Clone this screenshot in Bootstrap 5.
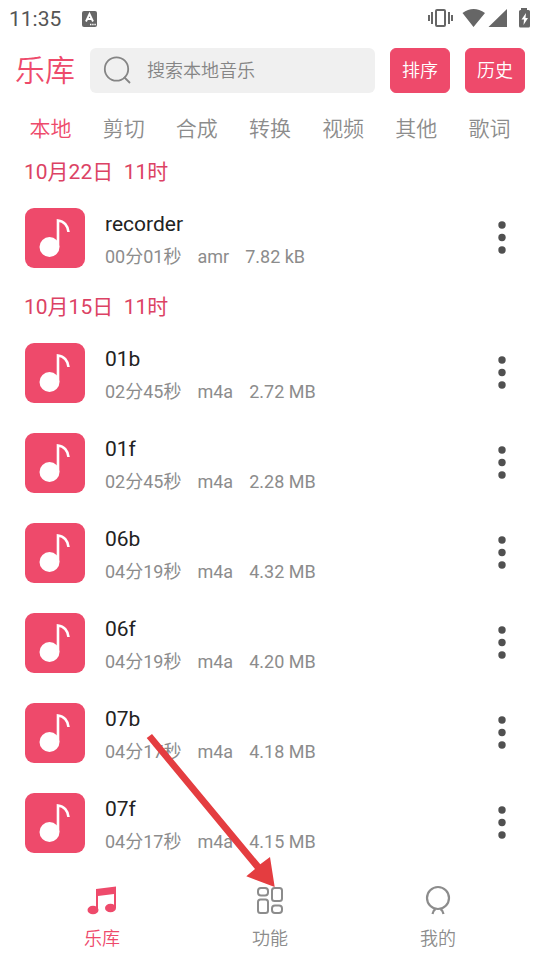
<!DOCTYPE html>
<html lang="zh-CN">
<head>
<meta charset="utf-8">
<meta name="viewport" content="width=device-width, initial-scale=1">
<title>乐库</title>
<link rel="stylesheet" href="https://cdn.jsdelivr.net/npm/bootstrap@5.3.0/dist/css/bootstrap.min.css">
<style>
  :root { --rose: #ee4a6b; --ash: #8c8c8c; }
  body { font-family: Roboto, "Noto Sans CJK SC", sans-serif; background: #fff; color: #222; font-size: 18px; line-height: 24px; }
  svg { display: block; flex-shrink: 0; }
  .status { height: 37px; padding: 0 10px 0 9px; color: #555; font-size: 21px; }
  .topbar { padding: 11px 15px 0; gap: 15px; }
  .brand { font-size: 30px; line-height: 45px; font-weight: 350; color: var(--rose); margin: 0; }
  .search { height: 45px; background: #f0f0f0; border-radius: 6px; padding: 0 12px; gap: 14px; }
  .search input { font-size: 18px; line-height: 24px; color: #555; font-weight: 350; }
  .search input::placeholder { color: #858585; opacity: 1; }
  .btn-rose { --bs-btn-bg: var(--rose); --bs-btn-color: #fff; --bs-btn-border-color: var(--rose); --bs-btn-hover-bg: #d93d5d; --bs-btn-hover-color: #fff; --bs-btn-padding-x: 0; --bs-btn-padding-y: 0; --bs-btn-border-radius: 6px; --bs-btn-font-size: 18px; --bs-btn-font-weight: 350; flex: 0 0 60px; height: 45px; }
  .tabs { padding: 17px 14px 0 14px; }
  .tabs a { font-size: 21px; line-height: 38px; font-weight: 350; color: var(--ash); }
  .tabs a.active, .dock a.active { color: var(--rose); }
  .day { font-size: 21px; line-height: 42px; font-weight: 400; color: #dc4264; padding: 3px 0 0 24px; margin: 0; white-space: pre; }
  .song { height: 90px; padding: 0 16px 0 25px; gap: 20px; }
  .cover { width: 60px; height: 60px; background: var(--rose); border-radius: 9px; }
  .title { font-size: 21px; line-height: 30px; font-weight: 400; margin: 0; padding-top: 2px; }
  .meta { color: var(--ash); gap: 16px; line-height: 24px; margin-top: 6px; }
  .more { width: 45px; height: 60px; color: #505050; }
  .dock { padding: 15px 18px 9px; color: var(--ash); }
  .dock a { color: inherit; font-weight: 350; gap: 11px; }
  .pointer { position: absolute; right: calc(50% - 5px); bottom: 64px; pointer-events: none; }
</style>
</head>
<body>
<svg class="d-none" aria-hidden="true">
  <symbol id="note" viewBox="0 0 60 60">
    <circle cx="24.500" cy="39" r="10" fill="#fff"/>
    <path d="M33 39V12.500C39 13 43 18 43.500 24" fill="none" stroke="#fff" stroke-width="2.600"/>
  </symbol>
  <symbol id="dots" viewBox="0 0 8 34">
    <g fill="currentColor"><circle cx="4" cy="4" r="3.700"/><circle cx="4" cy="16.500" r="3.700"/><circle cx="4" cy="29" r="3.700"/></g>
  </symbol>
</svg>
<div class="min-vh-100 d-flex flex-column">
  <div class="status d-flex align-items-center">
    <span>11:35</span>
    <svg class="ms-3" width="24" height="18" viewBox="0 0 24 18" aria-hidden="true"><rect x="5" y="1" width="15" height="16" rx="2" fill="#666"/><path d="M9 11.500L12.500 4L16 11.500M10 9H15" fill="none" stroke="#fff" stroke-width="1.900"/><path d="M13 14.500H19" stroke="#fff" stroke-width="1.300" stroke-dasharray="1.400 .8"/></svg>
    <svg class="ms-auto" width="103" height="22" viewBox="0 0 103 22" aria-hidden="true">
      <g fill="none" stroke="#666" stroke-width="2"><rect x="9" y="2" width="9" height="16" rx="1"/><path d="M2 7V13M5 4V16M22 4V16M25 7V13"/></g>
      <path d="M35.500 5Q46.500-3 58 5L46.500 19ZM61.500 19L80 1V19Z" fill="#666"/>
      <path d="M94 0H100V2H101.500Q103 2 103 3.500V18Q103 19.500 101.500 19.500H93.500Q92 19.500 92 18V3.500Q92 2 93.500 2H94Z" fill="#666"/>
      <path d="M99 5L94.500 11.500H97L96.500 17L101 10H98.500Z" fill="#fff"/>
    </svg>
  </div>
  <header class="topbar d-flex align-items-center">
    <h1 class="brand text-nowrap">乐库</h1>
    <label class="search d-flex align-items-center flex-grow-1 overflow-hidden" for="query">
      <svg width="31" height="31" viewBox="0 0 31 31" fill="none" stroke="#858585" stroke-width="1.800" aria-hidden="true"><circle cx="14.500" cy="14" r="11.700"/><path d="M22 22L28 28"/></svg>
      <input id="query" type="text" class="form-control border-0 bg-transparent shadow-none p-0" placeholder="搜索本地音乐" aria-label="搜索本地音乐">
    </label>
    <button type="button" class="btn btn-rose">排序</button>
    <button type="button" class="btn btn-rose">历史</button>
  </header>
  <nav class="tabs d-flex text-center" aria-label="分类">
    <a class="flex-fill text-decoration-none active" href="#local">本地</a>
    <a class="flex-fill text-decoration-none" href="#cut">剪切</a>
    <a class="flex-fill text-decoration-none" href="#merge">合成</a>
    <a class="flex-fill text-decoration-none" href="#convert">转换</a>
    <a class="flex-fill text-decoration-none" href="#video">视频</a>
    <a class="flex-fill text-decoration-none" href="#other">其他</a>
    <a class="flex-fill text-decoration-none" href="#lyrics">歌词</a>
  </nav>
  <main class="flex-grow-1" id="local">
    <h2 class="day">10月22日  11时</h2>
    <article class="song d-flex align-items-center">
      <svg class="cover" aria-hidden="true"><use href="#note"/></svg>
      <div class="flex-grow-1"><h3 class="title">recorder</h3><div class="meta d-flex"><span>00分01秒</span><span>amr</span><span>7.82 kB</span></div></div>
      <button type="button" class="more btn border-0 p-0 d-flex align-items-center justify-content-center" aria-label="更多"><svg width="8" height="34"><use href="#dots"/></svg></button>
    </article>
    <h2 class="day">10月15日  11时</h2>
    <article class="song d-flex align-items-center">
      <svg class="cover" aria-hidden="true"><use href="#note"/></svg>
      <div class="flex-grow-1"><h3 class="title">01b</h3><div class="meta d-flex"><span>02分45秒</span><span>m4a</span><span>2.72 MB</span></div></div>
      <button type="button" class="more btn border-0 p-0 d-flex align-items-center justify-content-center" aria-label="更多"><svg width="8" height="34"><use href="#dots"/></svg></button>
    </article>
    <article class="song d-flex align-items-center">
      <svg class="cover" aria-hidden="true"><use href="#note"/></svg>
      <div class="flex-grow-1"><h3 class="title">01f</h3><div class="meta d-flex"><span>02分45秒</span><span>m4a</span><span>2.28 MB</span></div></div>
      <button type="button" class="more btn border-0 p-0 d-flex align-items-center justify-content-center" aria-label="更多"><svg width="8" height="34"><use href="#dots"/></svg></button>
    </article>
    <article class="song d-flex align-items-center">
      <svg class="cover" aria-hidden="true"><use href="#note"/></svg>
      <div class="flex-grow-1"><h3 class="title">06b</h3><div class="meta d-flex"><span>04分19秒</span><span>m4a</span><span>4.32 MB</span></div></div>
      <button type="button" class="more btn border-0 p-0 d-flex align-items-center justify-content-center" aria-label="更多"><svg width="8" height="34"><use href="#dots"/></svg></button>
    </article>
    <article class="song d-flex align-items-center">
      <svg class="cover" aria-hidden="true"><use href="#note"/></svg>
      <div class="flex-grow-1"><h3 class="title">06f</h3><div class="meta d-flex"><span>04分19秒</span><span>m4a</span><span>4.20 MB</span></div></div>
      <button type="button" class="more btn border-0 p-0 d-flex align-items-center justify-content-center" aria-label="更多"><svg width="8" height="34"><use href="#dots"/></svg></button>
    </article>
    <article class="song d-flex align-items-center">
      <svg class="cover" aria-hidden="true"><use href="#note"/></svg>
      <div class="flex-grow-1"><h3 class="title">07b</h3><div class="meta d-flex"><span>04分17秒</span><span>m4a</span><span>4.18 MB</span></div></div>
      <button type="button" class="more btn border-0 p-0 d-flex align-items-center justify-content-center" aria-label="更多"><svg width="8" height="34"><use href="#dots"/></svg></button>
    </article>
    <article class="song d-flex align-items-center">
      <svg class="cover" aria-hidden="true"><use href="#note"/></svg>
      <div class="flex-grow-1"><h3 class="title">07f</h3><div class="meta d-flex"><span>04分17秒</span><span>m4a</span><span>4.15 MB</span></div></div>
      <button type="button" class="more btn border-0 p-0 d-flex align-items-center justify-content-center" aria-label="更多"><svg width="8" height="34"><use href="#dots"/></svg></button>
    </article>
  </main>
  <nav class="dock nav nav-fill" aria-label="主导航">
    <a class="nav-item d-flex flex-column align-items-center text-decoration-none active" href="#library">
      <svg width="32" height="32" viewBox="0 0 32 32" fill="currentColor" aria-hidden="true"><path d="M10 5L30 2.500V24H28V10L12 12V27H10Z"/><ellipse cx="7" cy="26" rx="5.500" ry="4.300"/><ellipse cx="24.500" cy="24" rx="5.500" ry="4.300"/></svg>
      <span>乐库</span>
    </a>
    <a class="nav-item d-flex flex-column align-items-center text-decoration-none position-relative" href="#tools">
      <svg width="32" height="32" viewBox="0 0 32 32" fill="none" stroke="currentColor" stroke-width="2" aria-hidden="true"><rect x="4" y="4" width="10" height="7.500" rx="3"/><rect x="18" y="4" width="10" height="13" rx="2.500"/><rect x="4" y="15.500" width="10" height="13.500" rx="2.500"/><rect x="18" y="21.500" width="10" height="7.500" rx="3"/></svg>
      <span>功能</span>
      <svg class="pointer" width="131" height="156" viewBox="0 0 131 156" fill="#e43d40" aria-hidden="true"><path d="M2.700 7L8 3L116.300 133.300L126 126L130.700 156L102.300 145.300L111 138Z"/></svg>
    </a>
    <a class="nav-item d-flex flex-column align-items-center text-decoration-none" href="#mine">
      <svg width="32" height="32" viewBox="0 0 32 32" fill="none" stroke="currentColor" stroke-width="2.200" aria-hidden="true"><circle cx="16" cy="14" r="11"/><path d="M13.500 25Q11 26.500 10.500 30M18.500 25Q21 26.500 21.500 30"/></svg>
      <span>我的</span>
    </a>
  </nav>
</div>
<script src="https://cdn.jsdelivr.net/npm/bootstrap@5.3.0/dist/js/bootstrap.bundle.min.js"></script>
</body>
</html>
